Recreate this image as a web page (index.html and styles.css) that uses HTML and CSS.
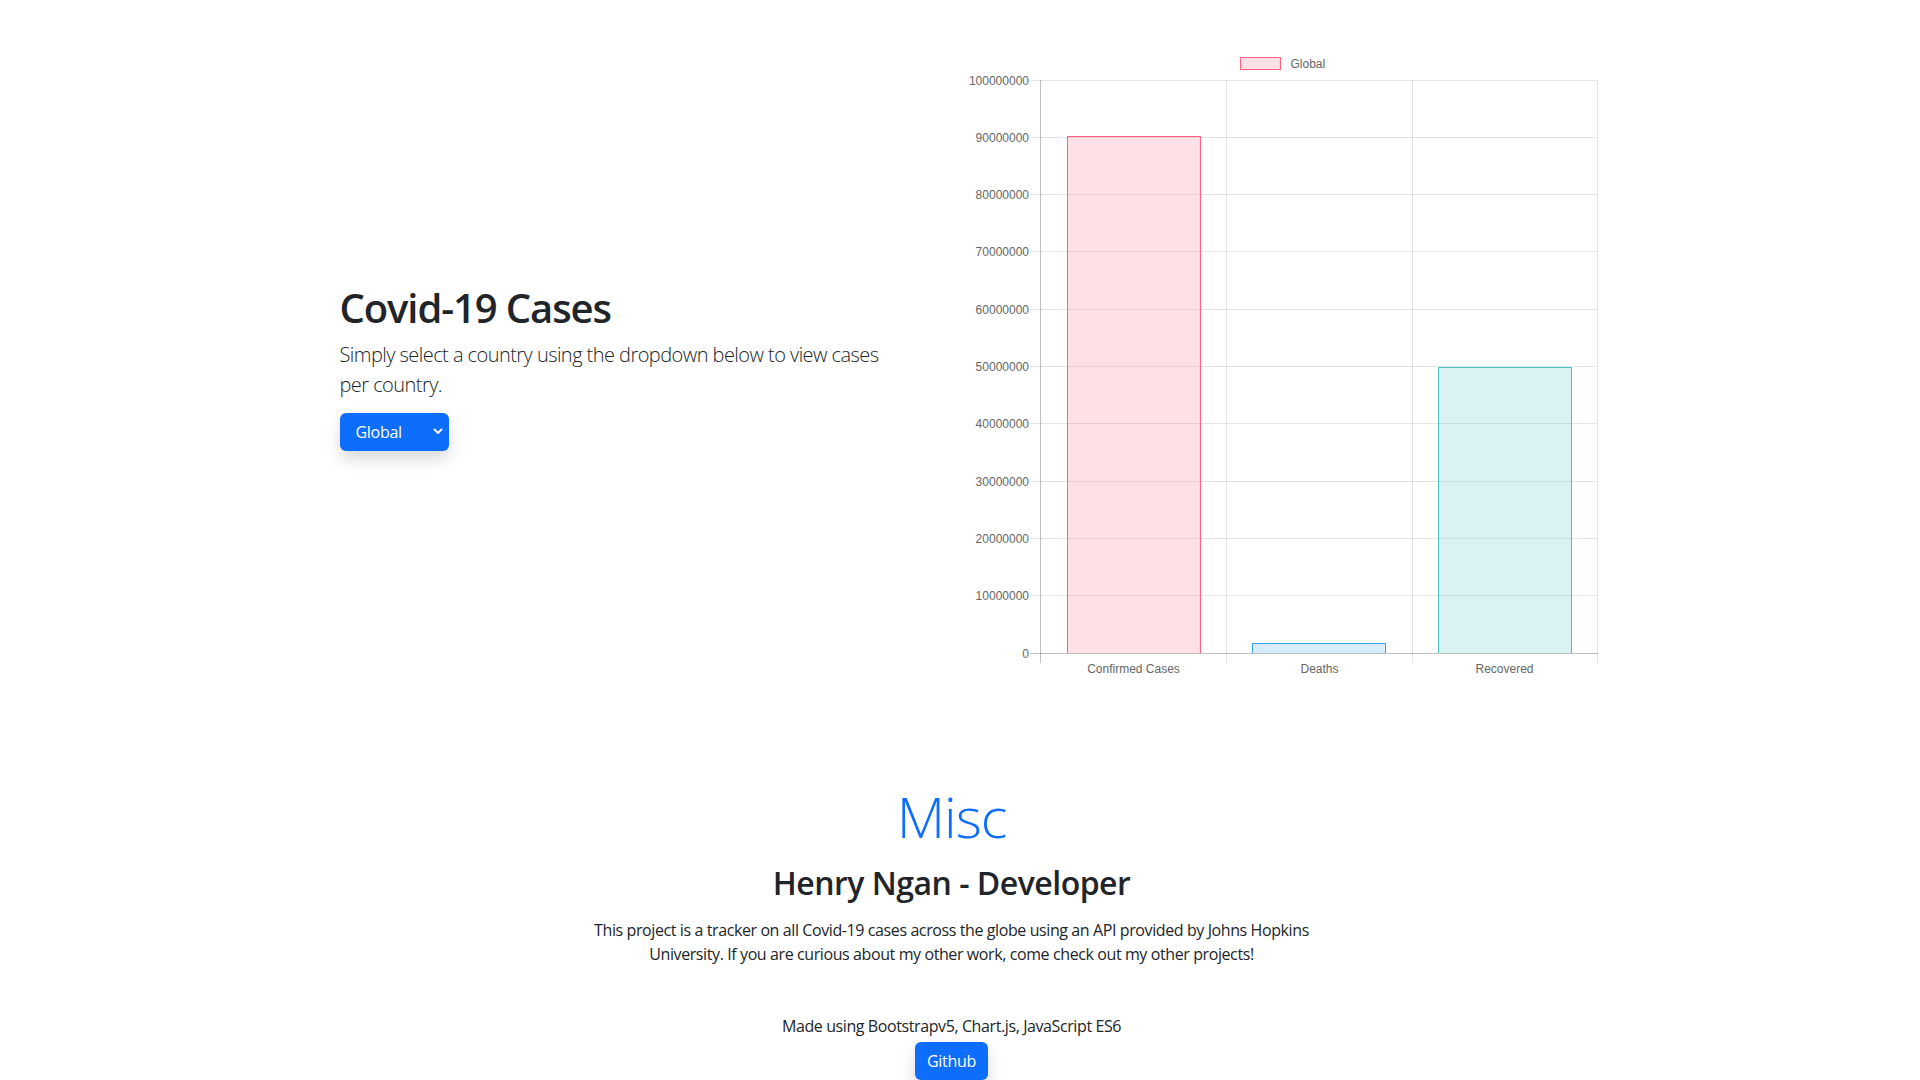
FILE: index.html
```html
<!DOCTYPE html>
<html lang="en">
<head>
<meta charset="utf-8">
<title>Covid-19 Tracker</title>
<link rel="stylesheet" href="styles.css">
</head>
<body>
<main class="page">
  <section class="container hero">
    <div class="col col-text">
      <h1 class="title">Covid-19 Cases</h1>
      <p class="lead">Simply select a country using the dropdown below to view cases per country.</p>
      <div class="select-btn">
        <span>Global</span>
        <svg class="chev" width="10" height="7" viewBox="0 0 10 7"><path d="M1.5 1.5 L5 5 L8.5 1.5" fill="none" stroke="#fff" stroke-width="1.8" stroke-linecap="round" stroke-linejoin="round"/></svg>
      </div>
    </div>
    <div class="col col-chart">
      <svg class="chart" width="636" height="636" viewBox="0 0 636 636">
        <g font-family="'Liberation Sans', Arial, sans-serif" font-size="12" fill="#666">
          <rect x="276.5" y="10.5" width="40" height="12" fill="rgba(255,99,132,0.2)" stroke="rgb(255,99,132)" stroke-width="1"/>
          <text x="326.5" y="21">Global</text>
        </g>
        <g stroke="rgba(0,0,0,0.1)" stroke-width="1">
          <line x1="66" y1="33.5" x2="633" y2="33.5"/>
          <line x1="66" y1="90.5" x2="633" y2="90.5"/>
          <line x1="66" y1="147.5" x2="633" y2="147.5"/>
          <line x1="66" y1="204.5" x2="633" y2="204.5"/>
          <line x1="66" y1="262.5" x2="633" y2="262.5"/>
          <line x1="66" y1="319.5" x2="633" y2="319.5"/>
          <line x1="66" y1="376.5" x2="633" y2="376.5"/>
          <line x1="66" y1="434.5" x2="633" y2="434.5"/>
          <line x1="66" y1="491.5" x2="633" y2="491.5"/>
          <line x1="66" y1="548.5" x2="633" y2="548.5"/>
          <line x1="262.5" y1="33" x2="262.5" y2="616"/>
          <line x1="448.5" y1="33" x2="448.5" y2="616"/>
          <line x1="633.5" y1="33" x2="633.5" y2="616"/>
        </g>
        <g stroke-width="1">
          <rect x="103.5" y="89.5" width="133" height="516.5" fill="rgba(255,99,132,0.2)" stroke="none"/>
          <path d="M103.5 606 V89.5 H236.5 V606" fill="none" stroke="rgb(255,99,132)"/>
          <rect x="288.5" y="596.5" width="133" height="9.5" fill="rgba(54,162,235,0.2)" stroke="none"/>
          <path d="M288.5 606 V596.5 H421.5 V606" fill="none" stroke="rgb(54,162,235)"/>
          <rect x="474.5" y="320.5" width="133" height="285.5" fill="rgba(75,192,192,0.2)" stroke="none"/>
          <path d="M474.5 606 V320.5 H607.5 V606" fill="none" stroke="rgb(75,192,192)"/>
        </g>
        <g stroke="rgba(0,0,0,0.25)" stroke-width="1">
          <line x1="76.5" y1="33" x2="76.5" y2="616"/>
          <line x1="66" y1="606.5" x2="634" y2="606.5"/>
        </g>
        <g font-family="'Liberation Sans', Arial, sans-serif" font-size="12" fill="#666" text-anchor="end">
          <text x="65" y="37.5">100000000</text>
          <text x="65" y="94.5">90000000</text>
          <text x="65" y="151.5">80000000</text>
          <text x="65" y="208.5">70000000</text>
          <text x="65" y="266.5">60000000</text>
          <text x="65" y="323.5">50000000</text>
          <text x="65" y="380.5">40000000</text>
          <text x="65" y="438.5">30000000</text>
          <text x="65" y="495.5">20000000</text>
          <text x="65" y="552.5">10000000</text>
          <text x="65" y="610.5">0</text>
        </g>
        <g font-family="'Liberation Sans', Arial, sans-serif" font-size="12" fill="#666" text-anchor="middle">
          <text x="169.5" y="626">Confirmed Cases</text>
          <text x="355.5" y="626">Deaths</text>
          <text x="540.5" y="626">Recovered</text>
        </g>
      </svg>
    </div>
  </section>

  <section class="misc">
    <h1 class="misc-title">Misc</h1>
    <h2 class="author">Henry Ngan - Developer</h2>
    <p class="about">This project is a tracker on all Covid-19 cases across the globe using an API provided by Johns Hopkins University. If you are curious about my other work, come check out my other projects!</p>
    <p class="made">Made using Bootstrapv5, Chart.js, JavaScript ES6</p>
    <a class="btn" href="#">Github</a>
  </section>
</main>
</body>
</html>
```
FILE: styles.css
```css
* { box-sizing: border-box; }
html, body { height: 100%; }
body {
  margin: 0;
  padding-right: 17px;
  overflow: hidden;
  background: #fff;
  color: #212529;
  font-family: "Open Sans", "Noto Sans", sans-serif;
  font-size: 16px;
  line-height: 1.5;
}
.page { width: 100%; }
.container {
  max-width: 1320px;
  margin: 0 auto;
}
.hero {
  display: flex;
  align-items: center;
  padding-top: 47px;
}
.col { flex: 0 0 50%; padding: 0 12px; }
.col-text { padding-left: 48px; padding-top: 4.7px; }
.chart { display: block; }
.title {
  margin: 0 0 8px;
  font-size: 40px;
  font-weight: 600;
  line-height: 1.2;
  letter-spacing: -1.1px;
}
.lead {
  margin: 0 0 13.7px;
  font-size: 20px;
  font-weight: 300;
  line-height: 30px;
  max-width: 560px;
  letter-spacing: -0.55px;
}
.select-btn {
  display: inline-flex;
  align-items: center;
  justify-content: space-between;
  width: 109px;
  height: 38px;
  padding: 0 6px 0 16px;
  background: #0d6efd;
  color: #fff;
  border-radius: 6px;
  box-shadow: 0 8px 16px rgba(0,0,0,0.15);
  font-size: 16px;
  letter-spacing: -0.3px;
}
.chev { display: block; margin-top: -1px; }
.misc {
  display: flex;
  flex-direction: column;
  align-items: center;
  text-align: center;
  margin-top: 99.5px;
}
.misc-title {
  margin: 0 0 14.5px;
  font-size: 56px;
  font-weight: 300;
  line-height: 1.2;
  color: #0d6efd;
  letter-spacing: -1px;
}
.author {
  margin: 0 0 15px;
  font-size: 32px;
  font-weight: 600;
  line-height: 1.2;
  letter-spacing: -0.5px;
}
.about {
  margin: 0 0 48px;
  max-width: 740px;
  font-size: 16px;
  line-height: 24px;
  letter-spacing: -0.4px;
}
.made {
  margin: 0 0 4px;
  letter-spacing: -0.4px;
}
.btn {
  display: inline-block;
  padding: 6px 12px;
  height: 38px;
  line-height: 26px;
  background: #0d6efd;
  color: #fff;
  text-decoration: none;
  border-radius: 6px;
  box-shadow: 0 8px 16px rgba(0,0,0,0.15);
  letter-spacing: -0.3px;
}
```
